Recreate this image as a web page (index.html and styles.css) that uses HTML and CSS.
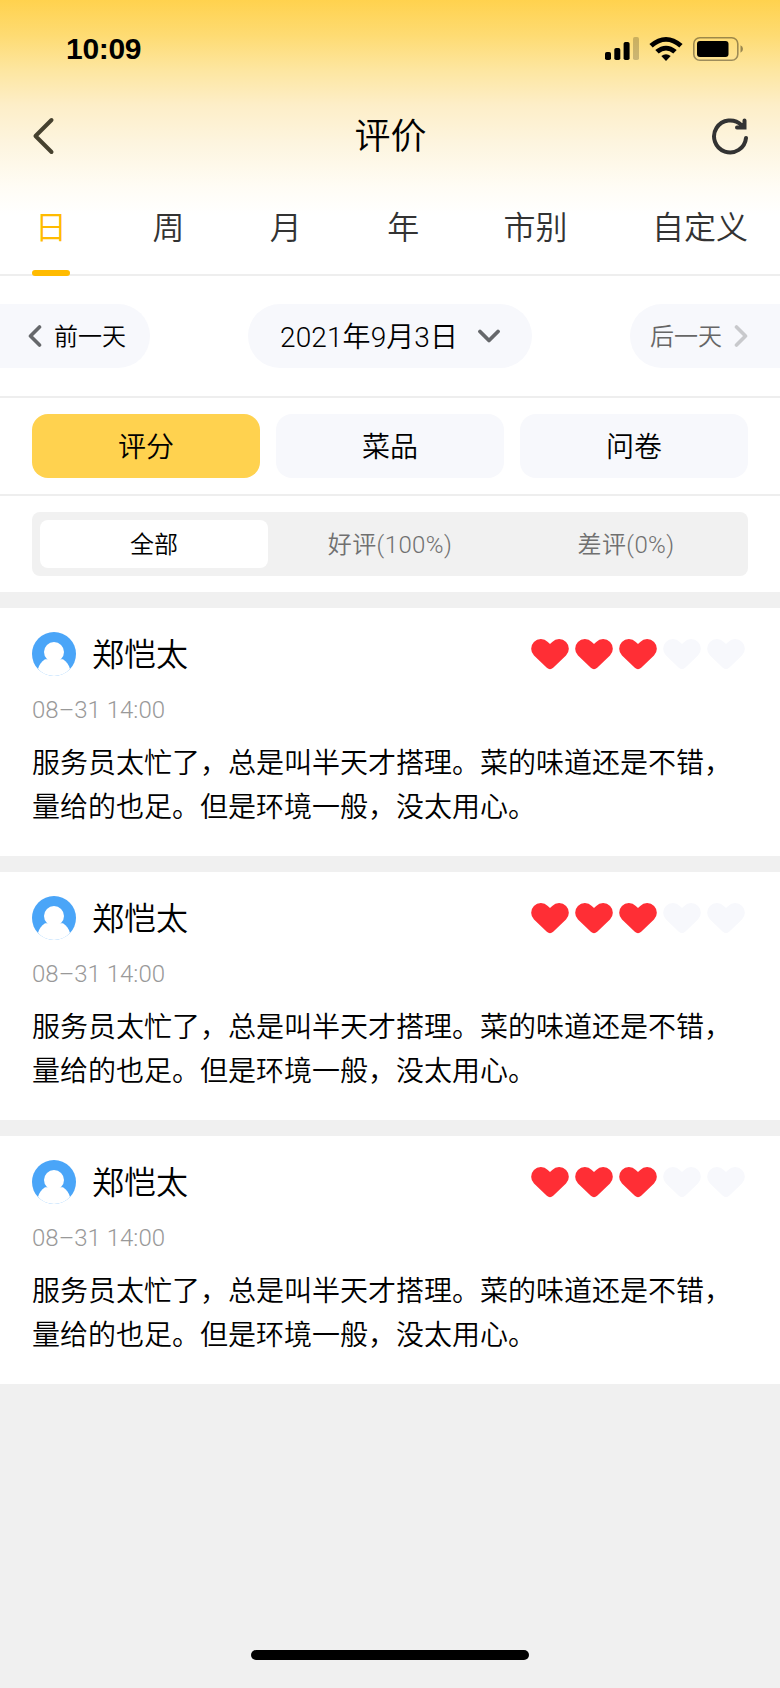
FILE: index.html
```html
<!DOCTYPE html>
<html lang="zh-CN">
<head>
<meta charset="utf-8">
<title>评价</title>
<link rel="stylesheet" href="styles.css">
</head>
<body>
<svg class="defs" width="0" height="0">
  <symbol id="heart" viewBox="0 0 38 31">
    <path d="M3 16.600A9.700 9.700 0 0 1 2.900 3A9.900 9.900 0 0 1 16.800 2.900L19 5L21.200 2.900A9.900 9.900 0 0 1 35.100 3A9.700 9.700 0 0 1 35 16.600L22.200 28.800Q19 31.600 15.800 28.800Z"/>
  </symbol>
  <symbol id="avatar" viewBox="0 0 44 44">
    <circle cx="22" cy="22" r="22" fill="#4aa5f8"/>
    <circle cx="22" cy="20" r="10" fill="#fff"/>
    <path fill="#fff" d="M13 27.300H31C34.600 29.600 36.900 33 38 37A21.800 21.800 0 0 1 6 37C7.100 33 9.400 29.600 13 27.300Z"/>
  </symbol>
</svg>

<header class="header">
  <div class="status">
    <span class="clock">10:09</span>
    <div class="indicators">
      <svg width="34" height="24" viewBox="0 0 34 24">
        <rect x="0" y="15" width="6" height="8" rx="1.800"/>
        <rect x="9.300" y="11" width="6" height="12" rx="1.800"/>
        <rect x="18.600" y="5" width="6" height="18" rx="1.800"/>
        <rect x="28" y="0" width="6" height="23" rx="1.800" opacity=".2"/>
      </svg>
      <svg class="wifi" width="34" height="24" viewBox="0 0 34 24">
        <path d="M0.400 7.100Q17 -7.100 33.600 7.100L30.300 10.500Q17 -.9 3.700 10.500Z"/>
        <path d="M6.300 13.100Q17 4.300 27.700 13.100L24.300 16.400Q17 10.600 9.700 16.400Z"/>
        <path d="M12.300 19.100Q17 15.500 21.700 19.100L17 24Z"/>
      </svg>
      <svg class="battery" width="50" height="24" viewBox="0 0 50 24">
        <rect x=".8" y=".8" width="44" height="22.400" rx="6" fill="none" stroke="#000" stroke-opacity=".38" stroke-width="1.600"/>
        <rect x="4" y="4" width="31.500" height="16" rx="3"/>
        <path d="M47.500 8.200Q50 9.500 50 12T47.500 15.800Z" opacity=".4"/>
      </svg>
    </div>
  </div>
  <div class="titlebar">
    <svg width="24" height="40" viewBox="0 0 24 40" fill="none" stroke="#46412f" stroke-width="4" stroke-linecap="round" stroke-linejoin="round"><path d="M19.500 4L3.500 20L19.500 36"/></svg>
    <h1 class="title">评价</h1>
    <svg class="refresh" width="38" height="38" viewBox="0 0 38 38" fill="none" stroke="#333" stroke-width="4" stroke-linecap="round" stroke-linejoin="round"><path d="M35 21A16 16 0 1 1 30.500 8.200"/><path stroke-linejoin="miter" d="M33.500 3.500V10.500H26M30 8L33 10"/></svg>
  </div>
  <nav class="tabs">
    <a class="tab active">日</a>
    <a class="tab week">周</a>
    <a class="tab month">月</a>
    <a class="tab">年</a>
    <a class="tab">市别</a>
    <a class="tab">自定义</a>
  </nav>
</header>

<section class="dates">
  <div class="pill prev">
    <svg width="14" height="22" viewBox="0 0 14 22" fill="none" stroke="#66686b" stroke-width="3.600" stroke-linecap="round" stroke-linejoin="round"><path d="M11.500 2L2.500 11L11.500 20"/></svg>
    <span class="label">前一天</span>
  </div>
  <div class="pill current">
    <span class="label">2021年9月3日</span>
    <svg width="22" height="14" viewBox="0 0 22 14" fill="none" stroke="#66686b" stroke-width="3.800" stroke-linecap="round" stroke-linejoin="round"><path d="M2 2.500L11 11.500L20 2.500"/></svg>
  </div>
  <div class="pill next">
    <span class="label">后一天</span>
    <svg width="14" height="22" viewBox="0 0 14 22" fill="none" stroke="#c8c9cc" stroke-width="3.600" stroke-linecap="round" stroke-linejoin="round"><path d="M2.500 2L11.500 11L2.500 20"/></svg>
  </div>
</section>

<section class="kinds">
  <div class="kind selected">评分</div>
  <div class="kind">菜品</div>
  <div class="kind">问卷</div>
</section>

<section class="filter">
  <div class="segments">
    <div class="segment chosen">全部</div>
    <div class="segment">好评(100%)</div>
    <div class="segment">差评(0%)</div>
  </div>
</section>

<main class="reviews">
  <article class="review">
    <div class="author">
      <svg class="avatar"><use href="#avatar"/></svg>
      <span class="name">郑恺太</span>
      <div class="hearts">
        <svg class="heart"><use href="#heart"/></svg><svg class="heart"><use href="#heart"/></svg><svg class="heart"><use href="#heart"/></svg><svg class="heart off"><use href="#heart"/></svg><svg class="heart off"><use href="#heart"/></svg>
      </div>
    </div>
    <div class="time">08–31 14:00</div>
    <p class="text">服务员太忙了，总是叫半天才搭理。菜的味道还是不错，量给的也足。但是环境一般，没太用心。</p>
  </article>
  <article class="review">
    <div class="author">
      <svg class="avatar"><use href="#avatar"/></svg>
      <span class="name">郑恺太</span>
      <div class="hearts">
        <svg class="heart"><use href="#heart"/></svg><svg class="heart"><use href="#heart"/></svg><svg class="heart"><use href="#heart"/></svg><svg class="heart off"><use href="#heart"/></svg><svg class="heart off"><use href="#heart"/></svg>
      </div>
    </div>
    <div class="time">08–31 14:00</div>
    <p class="text">服务员太忙了，总是叫半天才搭理。菜的味道还是不错，量给的也足。但是环境一般，没太用心。</p>
  </article>
  <article class="review">
    <div class="author">
      <svg class="avatar"><use href="#avatar"/></svg>
      <span class="name">郑恺太</span>
      <div class="hearts">
        <svg class="heart"><use href="#heart"/></svg><svg class="heart"><use href="#heart"/></svg><svg class="heart"><use href="#heart"/></svg><svg class="heart off"><use href="#heart"/></svg><svg class="heart off"><use href="#heart"/></svg>
      </div>
    </div>
    <div class="time">08–31 14:00</div>
    <p class="text">服务员太忙了，总是叫半天才搭理。菜的味道还是不错，量给的也足。但是环境一般，没太用心。</p>
  </article>
</main>

<footer class="home"><div class="home-bar"></div></footer>
</body>
</html>
```
FILE: styles.css
```css
* { box-sizing: border-box; }
body {
  margin: 0;
  width: 780px;
  height: 1688px;
  display: flex;
  flex-direction: column;
  overflow: hidden;
  background: #f0f0f0;
  color: #000;
  font-family: Roboto, "Noto Sans CJK SC", sans-serif;
  font-weight: 350;
}
svg { display: block; flex: none; }
.defs { position: absolute; }

.header {
  height: 276px;
  border-bottom: 2px solid #eee;
  background: linear-gradient(#ffd24e 0, #fedb72 35px, #fde6a0 70px, #fdeec8 105px, #fdf5e0 145px, #fffcf4 185px, #fff 215px, #fff 100%);
}
.status {
  height: 98px;
  padding: 0 37px 0 66px;
  display: flex;
  align-items: center;
  justify-content: space-between;
}
.clock { font-family: "Liberation Sans", sans-serif; font-size: 30px; font-weight: 700; letter-spacing: -0.3px; }
.indicators { display: flex; align-items: center; }
.wifi { margin-left: 10px; }
.battery { margin-left: 10px; }
.titlebar {
  height: 76px;
  padding: 0 31px 0 32px;
  display: flex;
  align-items: center;
  justify-content: space-between;
}
.title {
  margin: 0 0 0 14px;
  padding-top: 1px;
  font-size: 36px;
  line-height: 52px;
  font-weight: 350;
}
.tabs {
  height: 102px;
  padding: 0 32px;
  display: flex;
  justify-content: space-between;
  color: #333;
}
.tab {
  position: relative;
  font-size: 32px;
  line-height: 108px;
}
.week { margin: 0 2px 0 -2px; }
.month { margin: 0 1px 0 -1px; }
.tab.active { width: 38px; text-align: center; color: #fb0; }
.tab.active::after {
  content: "";
  position: absolute;
  left: 0;
  top: 96px;
  width: 38px;
  height: 6px;
  border-radius: 3px;
  background: #fb0;
}

.dates {
  height: 122px;
  padding: 28px 0;
  display: flex;
  justify-content: space-between;
  background: #fff;
  border-bottom: 2px solid #eee;
}
.pill {
  height: 64px;
  display: flex;
  align-items: center;
  background: #f7f8fc;
  font-size: 24px;
}
.label { padding-bottom: 3px; }
.prev { width: 150px; padding-left: 28px; gap: 12px; border-radius: 0 32px 32px 0; }
.current { width: 284px; padding-left: 32px; gap: 20px; border-radius: 32px; font-size: 28px; letter-spacing: 0.1px; }
.next { width: 150px; padding-left: 20px; gap: 12px; border-radius: 32px 0 0 32px; color: #666; }

.kinds {
  height: 98px;
  padding: 16px 32px;
  display: flex;
  gap: 16px;
  background: #fff;
  border-bottom: 2px solid #eee;
}
.kind {
  flex: 1;
  border-radius: 16px;
  background: #f7f8fc;
  font-size: 28px;
  line-height: 67px;
  text-align: center;
}
.kind.selected { background: #ffd24f; }

.filter { height: 96px; padding: 16px 32px; background: #fff; }
.segments {
  height: 64px;
  padding: 8px;
  display: flex;
  gap: 8px;
  border-radius: 8px;
  background: #f1f1f1;
}
.segment {
  flex: 1;
  border-radius: 8px;
  font-size: 24px;
  line-height: 51px;
  text-align: center;
  letter-spacing: 0.4px;
  color: #707070;
}
.segment.chosen { background: #fff; color: #000; letter-spacing: 0; }

.reviews { padding-top: 16px; display: flex; flex-direction: column; gap: 16px; }
.review { height: 248px; padding: 24px 32px 0; background: #fff; }
.author { height: 44px; display: flex; align-items: center; }
.avatar { width: 44px; height: 44px; }
.name { margin-left: 16px; padding-top: 2px; font-size: 32px; line-height: 44px; }
.hearts { margin-left: auto; margin-right: 3px; padding-top: 1px; display: flex; gap: 6px; }
.heart { width: 38px; height: 31px; fill: #ff2e35; }
.heart.off { fill: #f7f8fc; }
.time { margin-top: 17px; font-size: 24px; line-height: 34px; color: #999; }
.text { margin: 15px 0 0; font-size: 28px; line-height: 44px; }

.home { margin-top: auto; height: 38px; display: flex; justify-content: center; }
.home-bar { width: 278px; height: 10px; border-radius: 5px; background: #000; }
```
